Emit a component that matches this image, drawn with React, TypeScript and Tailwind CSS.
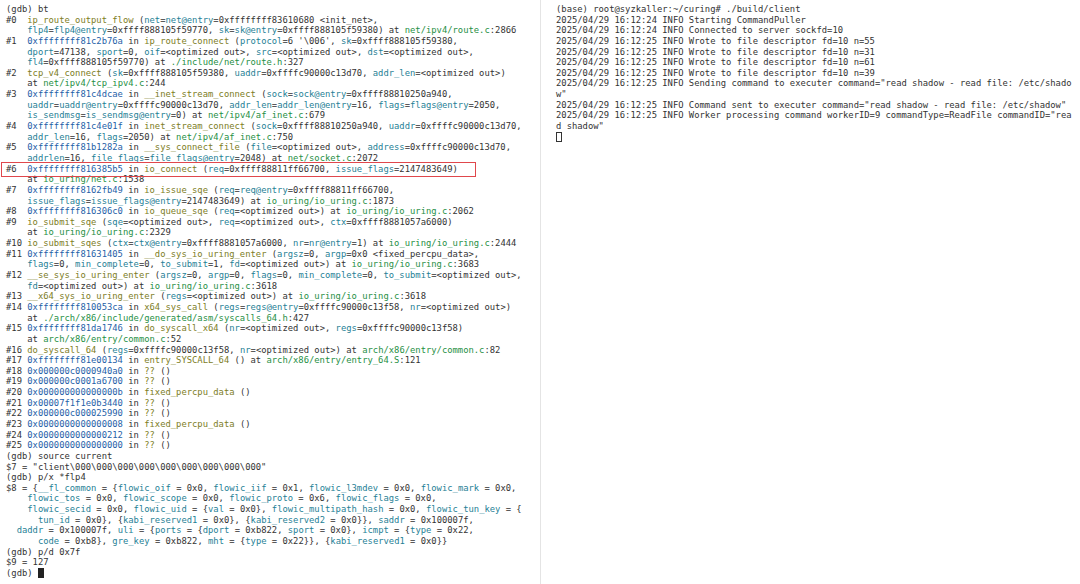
const mono = "font-['DejaVu_Sans_Mono',monospace]";

function A({ children }: { children: React.ReactNode }) {
  return <span className="text-[#1f5fa8]">{children}</span>;
}
function F({ children }: { children: React.ReactNode }) {
  return <span className="text-[#7d7d1e]">{children}</span>;
}
function V({ children }: { children: React.ReactNode }) {
  return <span className="text-[#1f7f96]">{children}</span>;
}
function P({ children }: { children: React.ReactNode }) {
  return <span className="text-[#1f8f45]">{children}</span>;
}

const opt = "<optimized out>";

function GdbPane() {
  return (
    <pre className={`${mono} relative w-[540px] shrink-0 pl-[6px] pt-[4px] text-[8.84px] leading-[10.64px] text-[#333333]`}>
      <div>(gdb) bt</div>
      <div>#0  <F>ip_route_output_flow</F> (<V>net</V>=<V>net@entry</V>=0xffffffff83610680 {"<init_net>"},</div>
      <div>    <V>flp4</V>=<V>flp4@entry</V>=0xffff888105f59770, <V>sk</V>=<V>sk@entry</V>=0xffff888105f59380) at <P>net/ipv4/route.c</P>:2866</div>
      <div>#1  <A>0xffffffff81c2b76a</A> in <F>ip_route_connect</F> (<V>protocol</V>=6 '\006', <V>sk</V>=0xffff888105f59380,</div>
      <div>    <V>dport</V>=47138, <V>sport</V>=0, <V>oif</V>={opt}, <V>src</V>={opt}, <V>dst</V>={opt},</div>
      <div>    <V>fl4</V>=0xffff888105f59770) at <P>./include/net/route.h</P>:327</div>
      <div>#2  <F>tcp_v4_connect</F> (<V>sk</V>=0xffff888105f59380, <V>uaddr</V>=0xffffc90000c13d70, <V>addr_len</V>={opt})</div>
      <div>    at <P>net/ipv4/tcp_ipv4.c</P>:244</div>
      <div>#3  <A>0xffffffff81c4dcae</A> in <F>__inet_stream_connect</F> (<V>sock</V>=<V>sock@entry</V>=0xffff88810250a940,</div>
      <div>    <V>uaddr</V>=<V>uaddr@entry</V>=0xffffc90000c13d70, <V>addr_len</V>=<V>addr_len@entry</V>=16, <V>flags</V>=<V>flags@entry</V>=2050,</div>
      <div>    <V>is_sendmsg</V>=<V>is_sendmsg@entry</V>=0) at <P>net/ipv4/af_inet.c</P>:679</div>
      <div>#4  <A>0xffffffff81c4e01f</A> in <F>inet_stream_connect</F> (<V>sock</V>=0xffff88810250a940, <V>uaddr</V>=0xffffc90000c13d70,</div>
      <div>    <V>addr_len</V>=16, <V>flags</V>=2050) at <P>net/ipv4/af_inet.c</P>:750</div>
      <div>#5  <A>0xffffffff81b1282a</A> in <F>__sys_connect_file</F> (<V>file</V>={opt}, <V>address</V>=0xffffc90000c13d70,</div>
      <div>    <V>addrlen</V>=16, <V>file_flags</V>=<V>file_flags@entry</V>=2048) at <P>net/socket.c</P>:2072</div>
      <div>#6  <A>0xffffffff816385b5</A> in <F>io_connect</F> (<V>req</V>=0xffff88811ff66700, <V>issue_flags</V>=2147483649)</div>
      <div>    at <P>io_uring/net.c</P>:1538</div>
      <div>#7  <A>0xffffffff8162fb49</A> in <F>io_issue_sqe</F> (<V>req</V>=<V>req@entry</V>=0xffff88811ff66700,</div>
      <div>    <V>issue_flags</V>=<V>issue_flags@entry</V>=2147483649) at <P>io_uring/io_uring.c</P>:1873</div>
      <div>#8  <A>0xffffffff816306c0</A> in <F>io_queue_sqe</F> (<V>req</V>={opt}) at <P>io_uring/io_uring.c</P>:2062</div>
      <div>#9  <F>io_submit_sqe</F> (<V>sqe</V>={opt}, <V>req</V>={opt}, <V>ctx</V>=0xffff8881057a6000)</div>
      <div>    at <P>io_uring/io_uring.c</P>:2329</div>
      <div>#10 <F>io_submit_sqes</F> (<V>ctx</V>=<V>ctx@entry</V>=0xffff8881057a6000, <V>nr</V>=<V>nr@entry</V>=1) at <P>io_uring/io_uring.c</P>:2444</div>
      <div>#11 <A>0xffffffff81631405</A> in <F>__do_sys_io_uring_enter</F> (<V>argsz</V>=0, <V>argp</V>=0x0 {"<fixed_percpu_data>"},</div>
      <div>    <V>flags</V>=0, <V>min_complete</V>=0, <V>to_submit</V>=1, <V>fd</V>={opt}) at <P>io_uring/io_uring.c</P>:3683</div>
      <div>#12 <F>__se_sys_io_uring_enter</F> (<V>argsz</V>=0, <V>argp</V>=0, <V>flags</V>=0, <V>min_complete</V>=0, <V>to_submit</V>={opt},</div>
      <div>    <V>fd</V>={opt}) at <P>io_uring/io_uring.c</P>:3618</div>
      <div>#13 <F>__x64_sys_io_uring_enter</F> (<V>regs</V>={opt}) at <P>io_uring/io_uring.c</P>:3618</div>
      <div>#14 <A>0xffffffff810053ca</A> in <F>x64_sys_call</F> (<V>regs</V>=<V>regs@entry</V>=0xffffc90000c13f58, <V>nr</V>={opt})</div>
      <div>    at <P>./arch/x86/include/generated/asm/syscalls_64.h</P>:427</div>
      <div>#15 <A>0xffffffff81da1746</A> in <F>do_syscall_x64</F> (<V>nr</V>={opt}, <V>regs</V>=0xffffc90000c13f58)</div>
      <div>    at <P>arch/x86/entry/common.c</P>:52</div>
      <div>#16 <F>do_syscall_64</F> (<V>regs</V>=0xffffc90000c13f58, <V>nr</V>={opt}) at <P>arch/x86/entry/common.c</P>:82</div>
      <div>#17 <A>0xffffffff81e00134</A> in <F>entry_SYSCALL_64</F> () at <P>arch/x86/entry/entry_64.S</P>:121</div>
      <div>#18 <A>0x000000c0000940a0</A> in <F>??</F> ()</div>
      <div>#19 <A>0x000000c0001a6700</A> in <F>??</F> ()</div>
      <div>#20 <A>0x000000000000000b</A> in <F>fixed_percpu_data</F> ()</div>
      <div>#21 <A>0x00007f1f1e0b3440</A> in <F>??</F> ()</div>
      <div>#22 <A>0x000000c000025990</A> in <F>??</F> ()</div>
      <div>#23 <A>0x0000000000000008</A> in <F>fixed_percpu_data</F> ()</div>
      <div>#24 <A>0x0000000000000212</A> in <F>??</F> ()</div>
      <div>#25 <A>0x0000000000000000</A> in <F>??</F> ()</div>
      <div>(gdb) source current</div>
      <div>$7 = "client\000\000\000\000\000\000\000\000\000"</div>
      <div>(gdb) p/x *flp4</div>
      <div>$8 = {"{"}<V>__fl_common</V> = {"{"}<V>flowic_oif</V> = 0x0, <V>flowic_iif</V> = 0x1, <V>flowic_l3mdev</V> = 0x0, <V>flowic_mark</V> = 0x0,</div>
      <div>    <V>flowic_tos</V> = 0x0, <V>flowic_scope</V> = 0x0, <V>flowic_proto</V> = 0x6, <V>flowic_flags</V> = 0x0,</div>
      <div>    <V>flowic_secid</V> = 0x0, <V>flowic_uid</V> = {"{"}<V>val</V> = 0x0{"}"}, <V>flowic_multipath_hash</V> = 0x0, <V>flowic_tun_key</V> = {"{"}</div>
      <div>      <V>tun_id</V> = 0x0{"}"}, {"{"}<V>kabi_reserved1</V> = 0x0{"}"}, {"{"}<V>kabi_reserved2</V> = 0x0{"}}"}, <V>saddr</V> = 0x100007f,</div>
      <div>  <V>daddr</V> = 0x100007f, <V>uli</V> = {"{"}<V>ports</V> = {"{"}<V>dport</V> = 0xb822, <V>sport</V> = 0x0{"}"}, <V>icmpt</V> = {"{"}<V>type</V> = 0x22,</div>
      <div>      <V>code</V> = 0xb8{"}"}, <V>gre_key</V> = 0xb822, <V>mht</V> = {"{"}<V>type</V> = 0x22{"}}"}, {"{"}<V>kabi_reserved1</V> = 0x0{"}}"}</div>
      <div>(gdb) p/d 0x7f</div>
      <div>$9 = 127</div>
      <div>(gdb) <span className="inline-block h-[10px] w-[6px] bg-[#222222] align-[-2px]" /></div>
      <div className="absolute left-[1px] top-[162px] h-[15px] w-[475px] border border-[#e0474c]" />
    </pre>
  );
}

function ClientPane() {
  return (
    <pre className={`${mono} flex-1 border-l border-[#e4e4e4] pl-[15px] pt-[4px] text-[8.84px] leading-[10.64px] text-[#333333]`}>
      <div>(base) root@syzkaller:~/curing# ./build/client</div>
      <div>2025/04/29 16:12:24 INFO Starting CommandPuller</div>
      <div>2025/04/29 16:12:24 INFO Connected to server sockfd=10</div>
      <div>2025/04/29 16:12:25 INFO Wrote to file descriptor fd=10 n=55</div>
      <div>2025/04/29 16:12:25 INFO Wrote to file descriptor fd=10 n=31</div>
      <div>2025/04/29 16:12:25 INFO Wrote to file descriptor fd=10 n=61</div>
      <div>2025/04/29 16:12:25 INFO Wrote to file descriptor fd=10 n=39</div>
      <div>2025/04/29 16:12:25 INFO Sending command to executer command="read shadow - read file: /etc/shado</div>
      <div>w"</div>
      <div>2025/04/29 16:12:25 INFO Command sent to executer command="read shadow - read file: /etc/shadow"</div>
      <div>2025/04/29 16:12:25 INFO Worker processing command workerID=9 commandType=ReadFile commandID="rea</div>
      <div>d shadow"</div>
      <div><span className="inline-block h-[10px] w-[6px] border border-[#333333] align-[-2px]" /></div>
    </pre>
  );
}

export default function App() {
  return (
    <div className="flex h-[584px] w-[1080px] overflow-hidden bg-white">
      <GdbPane />
      <ClientPane />
    </div>
  );
}
